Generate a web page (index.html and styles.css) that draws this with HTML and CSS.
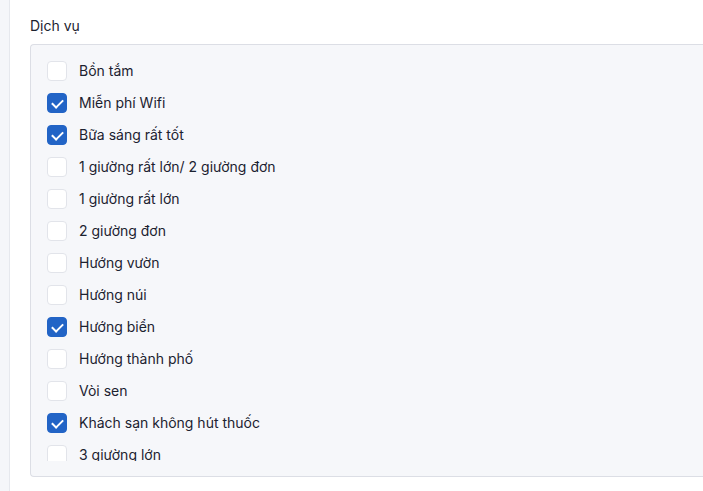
FILE: index.html
```html
<!DOCTYPE html>
<html lang="vi">
<head>
    <meta charset="UTF-8">
    <title>Dịch vụ</title>
    <link rel="stylesheet" href="styles.css">
</head>
<body>

<div class="panel">
    <div class="field-label">Dịch vụ</div>
    <div class="options-box">
        <ul class="options">
            <li><span class="check"></span>Bồn tắm</li>
            <li><span class="check on"></span>Miễn phí Wifi</li>
            <li><span class="check on"></span>Bữa sáng rất tốt</li>
            <li><span class="check"></span>1 giường rất lớn/ 2 giường đơn</li>
            <li><span class="check"></span>1 giường rất lớn</li>
            <li><span class="check"></span>2 giường đơn</li>
            <li><span class="check"></span>Hướng vườn</li>
            <li><span class="check"></span>Hướng núi</li>
            <li><span class="check on"></span>Hướng biển</li>
            <li><span class="check"></span>Hướng thành phố</li>
            <li><span class="check"></span>Vòi sen</li>
            <li><span class="check on"></span>Khách sạn không hút thuốc</li>
            <li><span class="check"></span>3 giường lớn</li>
        </ul>
    </div>
</div>

</body>
</html>
```

FILE: styles.css
```css
body, html {
    margin:0;
    padding:0;
    height:100%;
    overflow:hidden;
    background:#f5f6fa;
    color:#1c2230;
    font-family:Inter, "Noto Sans", sans-serif;
    font-size:14px;
}
.panel {
    margin-left:9px;
    height:100%;
    padding:16px 0 0 20px;
    box-sizing:border-box;
    background:#fff;
    border-left:1px solid #e6e8ee;
}
.field-label {
    line-height:20px;
    margin-bottom:8px;
}
.options-box {
    padding:16px 0 15px 16px;
    background:#f6f7fa;
    border:1px solid #dcdee5;
    border-right:none;
    border-radius:4px 0 0 4px;
}
.options {
    margin:0;
    padding:0;
    list-style:none;
    height:400px;
    overflow:hidden;
    display:flex;
    flex-direction:column;
    gap:12px;
}
.options li {
    display:flex;
    align-items:center;
    gap:12px;
    height:20px;
    flex-shrink:0;
    line-height:20px;
}
.check {
    width:20px;
    height:20px;
    box-sizing:border-box;
    border:1px solid #e2e4ea;
    border-radius:4px;
    background:#fff;
    flex-shrink:0;
    position:relative;
}
.check.on {
    background:#2264c6;
    border-color:#2264c6;
}
.check.on::after {
    content:"";
    position:absolute;
    left:6px;
    top:3px;
    width:5px;
    height:9px;
    border:solid #fff;
    border-width:0 2.5px 2.5px 0;
    transform:rotate(45deg);
}
```
